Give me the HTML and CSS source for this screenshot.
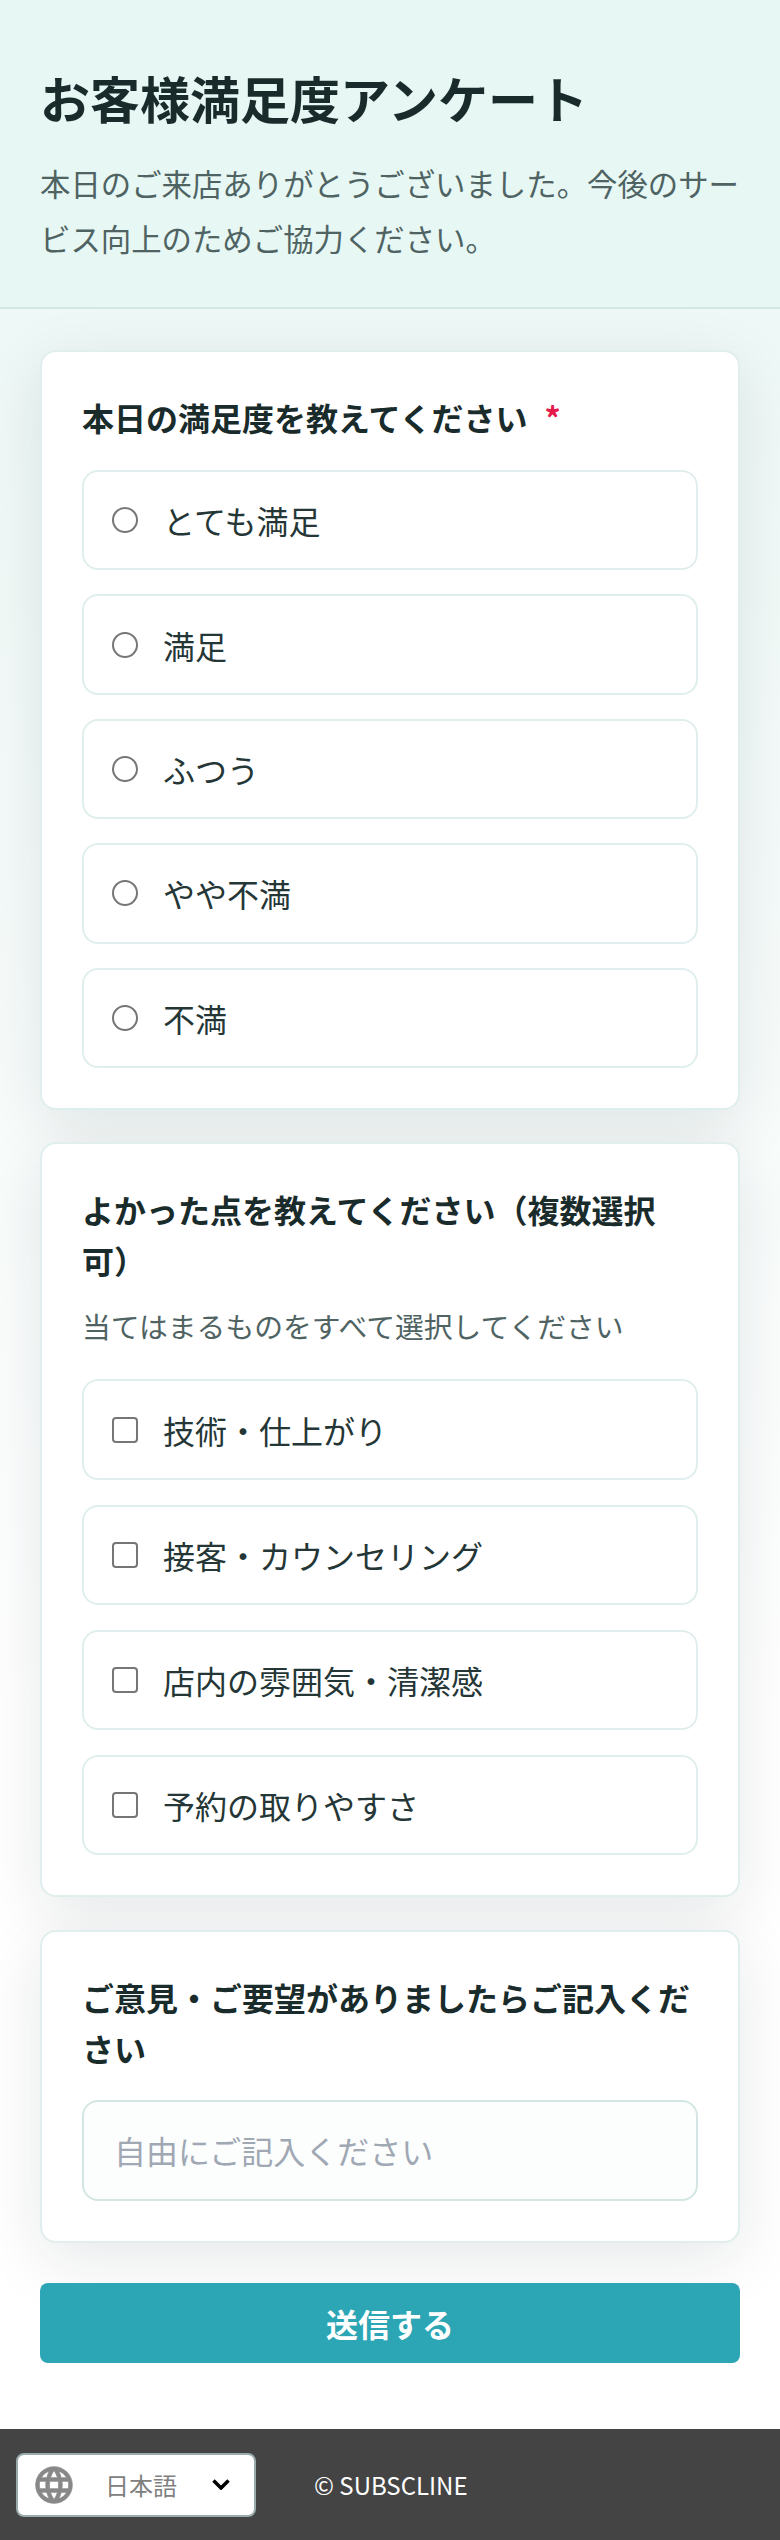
FILE: index.html
```html
<!DOCTYPE html>
<html lang="ja">
<head>
  <meta charset="UTF-8" />
  <title>お客様満足度アンケート</title>
  <meta name="viewport" content="width=device-width, initial-scale=1.0" />
  <link rel="stylesheet" href="styles.css">
</head>
<body>

  <header class="page-header">
    <h1>お客様満足度アンケート</h1>
    <p>本日のご来店ありがとうございました。今後のサービス向上のためご協力ください。</p>
  </header>

  <form class="survey">
    <section class="card">
      <h2>本日の満足度を教えてください<span class="required">*</span></h2>
      <div class="options">
        <label class="option"><input type="radio" name="rating"><span>とても満足</span></label>
        <label class="option"><input type="radio" name="rating"><span>満足</span></label>
        <label class="option"><input type="radio" name="rating"><span>ふつう</span></label>
        <label class="option"><input type="radio" name="rating"><span>やや不満</span></label>
        <label class="option"><input type="radio" name="rating"><span>不満</span></label>
      </div>
    </section>

    <section class="card">
      <h2>よかった点を教えてください（複数選択可）</h2>
      <p class="hint">当てはまるものをすべて選択してください</p>
      <div class="options">
        <label class="option"><input type="checkbox"><span>技術・仕上がり</span></label>
        <label class="option"><input type="checkbox"><span>接客・カウンセリング</span></label>
        <label class="option"><input type="checkbox"><span>店内の雰囲気・清潔感</span></label>
        <label class="option"><input type="checkbox"><span>予約の取りやすさ</span></label>
      </div>
    </section>

    <section class="card">
      <h2>ご意見・ご要望がありましたらご記入ください</h2>
      <input class="free-text" type="text" placeholder="自由にご記入ください">
    </section>

    <button class="submit" type="button">送信する</button>
  </form>

  <footer class="page-footer">
    <div class="lang-select">
      <svg class="globe" viewBox="0 0 24 24" width="44" height="44">
        <path d="M11.99 2C6.47 2 2 6.48 2 12s4.47 10 9.99 10C17.52 22 22 17.52 22 12S17.52 2 11.99 2zm6.93 6h-2.95c-.32-1.25-.78-2.45-1.38-3.56 1.84.63 3.37 1.91 4.33 3.56zM12 4.04c.83 1.2 1.48 2.53 1.91 3.96h-3.82c.43-1.43 1.08-2.76 1.91-3.96zM4.26 14C4.1 13.36 4 12.69 4 12s.1-1.36.26-2h3.38c-.08.66-.14 1.32-.14 2 0 .68.06 1.34.14 2H4.26zm.82 2h2.95c.32 1.25.78 2.45 1.38 3.56-1.84-.63-3.37-1.9-4.33-3.56zm2.95-8H5.08c.96-1.66 2.49-2.93 4.33-3.56C8.81 5.55 8.35 6.75 8.03 8zM12 19.96c-.83-1.2-1.48-2.53-1.91-3.96h3.82c-.43 1.43-1.08 2.76-1.91 3.96zM14.34 14H9.66c-.09-.66-.16-1.32-.16-2 0-.68.07-1.35.16-2h4.68c.09.65.16 1.32.16 2 0 .68-.07 1.34-.16 2zm.25 5.56c.6-1.11 1.06-2.31 1.38-3.56h2.95c-.96 1.65-2.49 2.93-4.33 3.56zM16.36 14c.08-.66.14-1.32.14-2 0-.68-.06-1.34-.14-2h3.38c.16.64.26 1.31.26 2s-.1 1.36-.26 2h-3.38z"/>
      </svg>
      <span class="lang-name">日本語</span>
      <svg class="chevron" viewBox="0 0 18 11" width="18" height="11">
        <polyline points="1.5,1.5 9,9 16.5,1.5"/>
      </svg>
    </div>
    <span class="copyright">© SUBSCLINE</span>
  </footer>

</body>
</html>
```

FILE: styles.css
```css
:root {
  --ink: #1a2b2b;
  --muted: #4f6363;
  --line: #e0eeed;
  --accent: #2ca5b5;
}

* {
  box-sizing: border-box;
}

body {
  margin: 0;
  font-family: "Noto Sans CJK JP", "Noto Sans", sans-serif;
  color: var(--ink);
  background: linear-gradient(180deg, #eef8f6 310px, #fff 1700px);
}

.page-header {
  padding: 57px 40px 41px;
  background-color: #e6f7f4;
  border-bottom: 2px solid #d3e6e3;
}

.page-header h1 {
  margin: 0 0 19px;
  font-size: 50px;
  line-height: 80px;
  font-weight: 700;
}

.page-header p {
  margin: 0;
  font-size: 30.4px;
  line-height: 55px;
  color: var(--muted);
}

.survey {
  display: flex;
  flex-direction: column;
  gap: 32.5px;
  padding: 41px 40px 65.5px;
}

.card {
  padding: 40px;
  background-color: #fff;
  border: 2px solid var(--line);
  border-radius: 16px;
  box-shadow: 0 16px 64px rgba(0, 30, 40, 0.1);
}

.card h2 {
  margin: 0;
  font-size: 32px;
  line-height: 51px;
  font-weight: 700;
}

.required {
  margin-left: 17px;
  color: #e6194b;
}

.hint {
  margin: 17px 0 0;
  font-size: 28.8px;
  line-height: 46px;
  color: var(--muted);
}

.options {
  display: flex;
  flex-direction: column;
  gap: 24px;
  margin-top: 27px;
}

.hint + .options {
  gap: 24.7px;
  margin-top: 30px;
}

.option {
  display: flex;
  align-items: center;
  gap: 25px;
  height: 100.4px;
  padding: 0 28px;
  font-size: 32px;
  color: #253636;
  background-color: #fff;
  border: 2px solid var(--line);
  border-radius: 16px;
}

.option input {
  flex: none;
  width: 26px;
  height: 26px;
  margin: 0;
  appearance: none;
  background-color: #fff;
  border: 2px solid #767676;
}

.option input[type="radio"] {
  border-radius: 50%;
}

.option input[type="checkbox"] {
  border-radius: 4px;
}

.free-text {
  display: block;
  width: 100%;
  height: 101px;
  margin-top: 26px;
  padding: 0 30px;
  font-family: inherit;
  font-size: 32px;
  background-color: #fcfefe;
  border: 2px solid #d3e6e3;
  border-radius: 16px;
}

.free-text::placeholder {
  color: #a0a8b4;
}

.submit {
  height: 80px;
  margin-top: 8px;
  font-family: inherit;
  font-size: 32px;
  font-weight: 700;
  color: #fff;
  background-color: var(--accent);
  border: none;
  border-radius: 8px;
}

.page-footer {
  display: flex;
  align-items: center;
  gap: 58px;
  height: 112px;
  padding-left: 16px;
  background-color: #444;
}

.lang-select {
  display: flex;
  align-items: center;
  width: 240px;
  height: 64px;
  padding: 0 24px 0 14px;
  background-color: #fff;
  border: 2px solid #9aabab;
  border-radius: 8px;
}

.globe {
  flex: none;
  fill: #888;
  stroke: #888;
  stroke-width: 0.4;
}

.lang-name {
  flex: 1;
  margin-left: 29px;
  font-size: 24px;
  color: #808080;
}

.chevron {
  flex: none;
  fill: none;
  stroke: #000;
  stroke-width: 3.5;
}

.copyright {
  font-size: 24px;
  color: #fff;
}
```
